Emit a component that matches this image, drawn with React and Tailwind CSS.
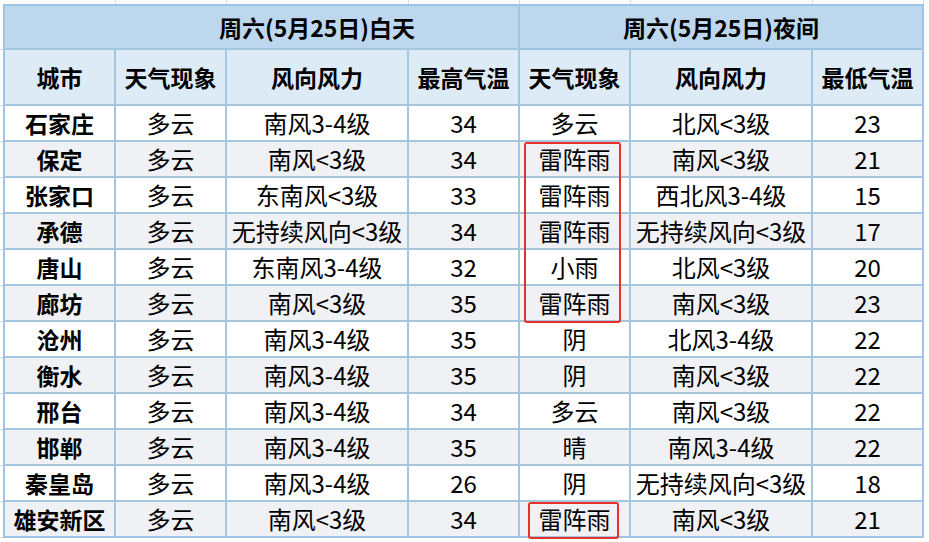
import React from 'react';

const rows = [
  ["石家庄", "多云", "南风3-4级", "34", "多云", "北风<3级", "23"],
  ["保定", "多云", "南风<3级", "34", "雷阵雨", "南风<3级", "21"],
  ["张家口", "多云", "东南风<3级", "33", "雷阵雨", "西北风3-4级", "15"],
  ["承德", "多云", "无持续风向<3级", "34", "雷阵雨", "无持续风向<3级", "17"],
  ["唐山", "多云", "东南风3-4级", "32", "小雨", "北风<3级", "20"],
  ["廊坊", "多云", "南风<3级", "35", "雷阵雨", "南风<3级", "23"],
  ["沧州", "多云", "南风3-4级", "35", "阴", "北风3-4级", "22"],
  ["衡水", "多云", "南风3-4级", "35", "阴", "南风<3级", "22"],
  ["邢台", "多云", "南风3-4级", "34", "多云", "南风<3级", "22"],
  ["邯郸", "多云", "南风3-4级", "35", "晴", "南风3-4级", "22"],
  ["秦皇岛", "多云", "南风3-4级", "26", "阴", "无持续风向<3级", "18"],
  ["雄安新区", "多云", "南风<3级", "34", "雷阵雨", "南风<3级", "21"],
];

const subHeads = ["城市", "天气现象", "风向风力", "最高气温", "天气现象", "风向风力", "最低气温"];
const colWidths = ["w-[111px]", "w-[111px]", "w-[182px]", "w-[111px]", "w-[111px]", "w-[182px]", "w-[111px]"];
const gutterRows = ["h-[44px]", "h-[56px]", ...rows.map(() => "h-[36px]")];

export default function App() {
  return (
    <div className="relative w-[929px] h-[542px] overflow-hidden bg-white text-black font-['Noto_Sans_CJK_SC','Noto_Sans',sans-serif]">
      {/* faint sheet gridlines above the table */}
      <div className="flex h-[4px] ml-[5px]">
        {colWidths.map((w, i) => (
          <div key={i} className={`${w} shrink-0 border-r border-[#dcdcdc]`} />
        ))}
      </div>

      <div className="flex">
        <div className="w-[3px] shrink-0 pt-[2px] flex flex-col">
          {gutterRows.map((h, i) => (
            <div key={i} className={`${h} shrink-0 border-b border-[#dcdcdc]`} />
          ))}
        </div>

        <div className="grid grid-cols-[111px_111px_182px_111px_111px_182px_111px] grid-rows-[44px_56px_repeat(12,36px)] border-l-2 border-t-2 border-[#9fc3e3]">
          <div className="col-span-4 flex items-center justify-center pl-[111px] bg-[#bdd7ee] border-r-2 border-b-2 border-[#a4c7de] text-[23px] font-bold leading-none">
            周六(5月25日)白天
          </div>
          <div className="col-span-3 flex items-center justify-center bg-[#bdd7ee] border-r-2 border-b-2 border-[#9fc3e3] text-[23px] font-bold leading-none">
            周六(5月25日)夜间
          </div>

          {subHeads.map((h, i) => (
            <div
              key={i}
              className={`flex items-center justify-center bg-[#ddebf7] border-b-2 border-[#a4c7de] text-[23px] font-bold leading-none ${i === 6 ? "border-r-2 border-r-[#9fc3e3]" : "border-r-2"}`}
            >
              {h}
            </div>
          ))}

          {rows.map((r, ri) =>
            r.map((c, ci) => (
              <div
                key={`${ri}-${ci}`}
                className={`flex items-center justify-center whitespace-nowrap border-r-2 border-b-2 border-[#a4c7de] leading-none ${ri % 2 === 1 ? "bg-[#f0f1f4]" : "bg-white"} ${ci === 0 ? "font-bold text-[23px]" : "text-[24px]"} ${ci === 6 ? "border-r-[#9fc3e3]" : ""} ${ri === rows.length - 1 ? "border-b-[#9fc3e3]" : ""}`}
              >
                {c}
              </div>
            ))
          )}
        </div>
      </div>

      {/* red highlight boxes */}
      <div className="absolute left-[524px] top-[142px] w-[97px] h-[181px] border-2 border-[#e8302a] rounded-[3px]" />
      <div className="absolute left-[528px] top-[502px] w-[91px] h-[37px] border-2 border-[#e8302a] rounded-[3px]" />
    </div>
  );
}
